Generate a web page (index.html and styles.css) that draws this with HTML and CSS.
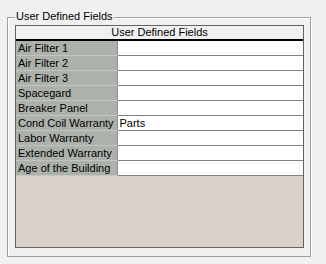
FILE: index.html
```html
<!DOCTYPE html>
<html lang="en">
<head>
  <meta charset="UTF-8" />
  <title>User Defined Fields</title>
  <link rel="stylesheet" href="styles.css">
</head>
<body>
  <div class="group">
    <span class="group-title">User Defined Fields</span>
    <div class="grid">
      <table class="fields">
        <colgroup><col class="name-col"><col></colgroup>
        <tr><th colspan="2">User Defined Fields</th></tr>
        <tr><td class="name">Air Filter 1</td><td class="value"></td></tr>
        <tr><td class="name">Air Filter 2</td><td class="value"></td></tr>
        <tr><td class="name">Air Filter 3</td><td class="value"></td></tr>
        <tr><td class="name">Spacegard</td><td class="value"></td></tr>
        <tr><td class="name">Breaker Panel</td><td class="value"></td></tr>
        <tr><td class="name">Cond Coil Warranty</td><td class="value">Parts</td></tr>
        <tr><td class="name">Labor Warranty</td><td class="value"></td></tr>
        <tr><td class="name">Extended Warranty</td><td class="value"></td></tr>
        <tr><td class="name">Age of the Building</td><td class="value"></td></tr>
      </table>
    </div>
  </div>
</body>
</html>
```

FILE: styles.css
```css
body {
  margin: 0;
  background: #f0f0f0;
  font-family: 'Liberation Sans', Arial, sans-serif;
  font-size: 11px;
  color: #000;
}
/* group box */
.group {
  position: relative;
  margin: 17px 0 0 7px;
  width: 304px;
  height: 240px;
  box-sizing: border-box;
  padding: 7px 6px 8px 7px;
  border: 1px solid #a0a0a0;
  box-shadow: 1px 1px 0 #fff, inset 1px 1px 0 #fff;
}
.group-title {
  position: absolute;
  top: -8px;
  left: 7px;
  padding: 0 1px;
  line-height: 13px;
  background: #f0f0f0;
}
/* grid */
.grid {
  width: 289px;
  height: 223px;
  box-sizing: border-box;
  border: 1px solid #636363;
  background: #dbd2cc;
}
.fields {
  width: 100%;
  border-collapse: collapse;
  table-layout: fixed;
}
.name-col {
  width: 101px;
}
.fields th {
  height: 13px;
  padding: 0;
  font-weight: normal;
  line-height: 13px;
  background: #f0f0f0;
  border-bottom: 2px solid #000;
  text-align: center;
}
.fields td {
  height: 14px;
  padding: 0 0 0 2px;
  line-height: 14px;
  white-space: nowrap;
  overflow: hidden;
}
.fields .name {
  background: #acb1aa;
  border-bottom: 1px solid #c2c6c0;
  border-right: 1px solid #8c8c8c;
}
.fields .value {
  background: #fff;
  border-bottom: 1px solid #808080;
}
```
